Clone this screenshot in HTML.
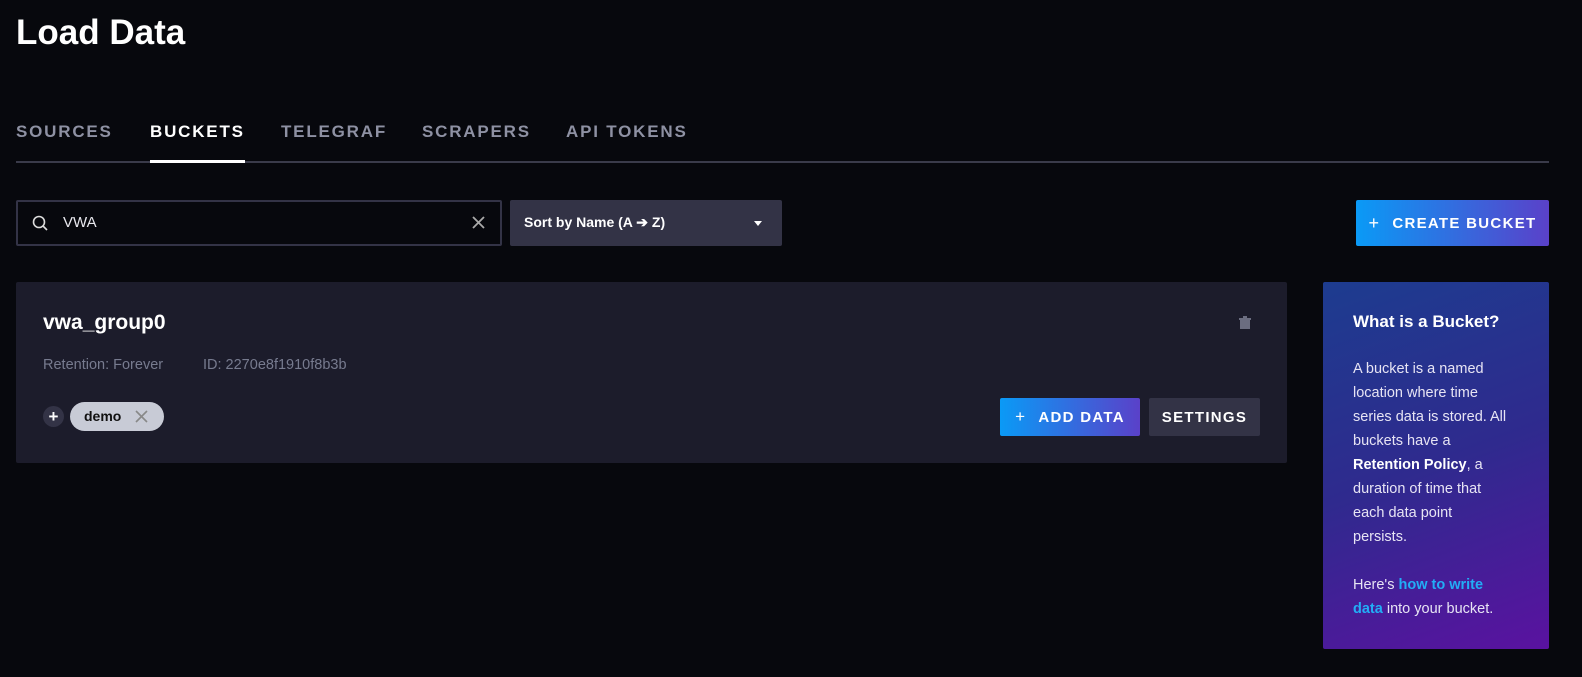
<!DOCTYPE html>
<html><head><style>
body{margin:0;width:1582px;height:677px;background:#07080d;font-family:"Liberation Sans",sans-serif;color:#fff;position:relative;overflow:hidden}
.a{position:absolute}
h1{position:absolute;left:16px;top:13px;margin:0;font-size:35px;font-weight:bold}
.tab{position:absolute;top:122px;font-size:17px;font-weight:bold;letter-spacing:1.8px;color:#8e91a3}
.btn{position:absolute;display:flex;align-items:center;justify-content:center;font-weight:bold;letter-spacing:1.3px;font-size:15px;border-radius:2px}
.grad{background:linear-gradient(90deg,#0a9af6,#5a41c9)}
.side p{margin:0;font-size:14.5px;line-height:24px;color:#e7e4f4;white-space:nowrap}
</style></head><body>
<h1>Load Data</h1>
<div class="tab" style="left:16px">SOURCES</div>
<div class="tab" style="left:150px;color:#fff">BUCKETS</div>
<div class="tab" style="left:281px">TELEGRAF</div>
<div class="tab" style="left:422px">SCRAPERS</div>
<div class="tab" style="left:566px">API TOKENS</div>
<div class="a" style="left:16px;top:161px;width:1533px;height:2px;background:#3a3b4a"></div>
<div class="a" style="left:150px;top:160px;width:95px;height:3px;background:#fff"></div>

<div class="a" style="left:16px;top:200px;width:482px;height:42px;border:2px solid #333346;border-radius:2px;background:#07080d"></div>
<svg class="a" style="left:32px;top:215px" width="16" height="16" viewBox="0 0 16 16"><circle cx="7" cy="7" r="5.5" fill="none" stroke="#ddd" stroke-width="1.6"/><path d="M11 11l4 4" stroke="#ddd" stroke-width="1.6"/></svg>
<div class="a" style="left:63px;top:214px;font-size:15px;color:#e8e8ee">VWA</div>
<svg class="a" style="left:472px;top:216px" width="13" height="13"><path d="M1 1l11 11M12 1L1 12" stroke="#aaa" stroke-width="1.8"/></svg>
<div class="a" style="left:510px;top:200px;width:272px;height:46px;background:#333346;border-radius:2px"></div>
<div class="a" style="left:524px;top:214px;font-size:14px;font-weight:bold">Sort by Name (A ➔ Z)</div>
<div class="a" style="left:754px;top:221px;border:4px solid transparent;border-top:5px solid #fff"></div>

<div class="btn grad" style="left:1356px;top:200px;width:193px;height:46px;font-size:15px"><span style="font-weight:normal;font-size:18px;margin-right:12px">+</span>CREATE BUCKET</div>

<div class="a" style="left:16px;top:282px;width:1271px;height:181px;background:#1c1c2b;border-radius:2px"></div>
<div class="a" style="left:43px;top:311px;font-size:21px;font-weight:bold">vwa_group0</div>
<div class="a" style="left:43px;top:357px;font-size:14.5px;color:#777b8f">Retention: Forever</div>
<div class="a" style="left:203px;top:357px;font-size:14.5px;color:#777b8f">ID: 2270e8f1910f8b3b</div>
<svg class="a" style="left:1239px;top:316px" width="12" height="13"><rect x="4" y="0" width="4" height="2" fill="#6b6d80"/><rect x="0" y="2" width="12" height="2" fill="#6b6d80"/><rect x="1" y="4" width="10" height="9" fill="#6b6d80"/></svg>
<div class="a" style="left:43px;top:406px;width:21px;height:21px;border-radius:50%;background:#333346;text-align:center;line-height:21px;font-size:17px;font-weight:bold">+</div>
<div class="a" style="left:70px;top:402px;width:94px;height:29px;border-radius:15px;background:#c8cbd6"></div>
<div class="a" style="left:84px;top:408px;font-size:14px;font-weight:bold;color:#111">demo</div>
<svg class="a" style="left:135px;top:410px" width="13" height="13"><path d="M1 1l11 11M12 1L1 12" stroke="#888" stroke-width="1.6"/></svg>
<div class="btn grad" style="left:1000px;top:398px;width:140px;height:38px"><span style="font-weight:normal;font-size:17px;margin-right:12px">+</span>ADD DATA</div>
<div class="btn" style="left:1149px;top:398px;width:111px;height:38px;background:#333346">SETTINGS</div>

<div class="a side" style="left:1323px;top:282px;width:226px;height:367px;background:linear-gradient(160deg,#1d3c8f 0%,#2f2a8e 50%,#5a12a0 100%);border-radius:2px">
<div style="position:absolute;left:30px;top:30px;font-size:17px;font-weight:bold">What is a Bucket?</div>
<div style="position:absolute;left:30px;top:75px;width:180px">
<p>A bucket is a named<br>location where time<br>series data is stored. All<br>buckets have a<br><b style="color:#fff">Retention Policy</b>, a<br>duration of time that<br>each data point<br>persists.</p>
<p style="margin-top:24px">Here's <b style="color:#22adf6">how to write</b><br><b style="color:#22adf6">data</b> into your bucket.</p>
</div></div>
</body></html>
